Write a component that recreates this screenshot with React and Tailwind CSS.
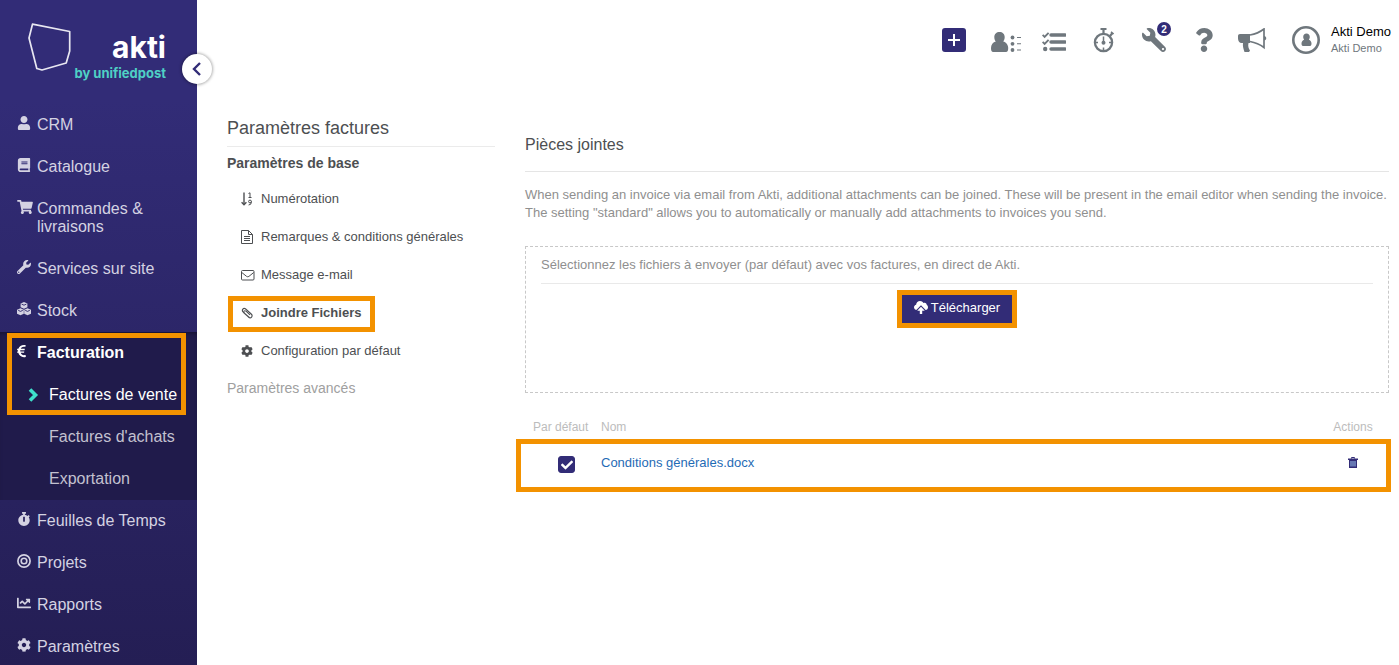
import React, { useState } from 'react';
import {
	FaUser,
	FaBook,
	FaShoppingCart,
	FaWrench,
	FaEuroSign,
	FaStopwatch,
	FaChartLine,
	FaCog,
	FaQuestion,
	FaCheck,
} from 'react-icons/fa';

const CubesIcon = () => (
	<svg viewBox="0 0 14 14" className="size-[14px]" fill="currentColor">
		<path d="M7 0 10.400 1.500V5.200L7 6.800 3.600 5.200V1.500zM3.500 6.200 6.800 7.700V11.700L3.500 13.300 0 11.700V7.700zM10.500 6.200 14 7.700V11.700L10.500 13.300 7.200 11.700V7.700z" />
		<path d="M4.600 2.100 7 3.200 9.400 2.100M1.200 8.300 3.500 9.400 5.800 8.300M8.200 8.300 10.500 9.400 12.800 8.300" fill="none" stroke="#2d2769" strokeWidth=".9" />
	</svg>
);

const TargetIcon = () => (
	<svg viewBox="0 0 14 14" className="size-[14px]" fill="none" stroke="currentColor">
		<circle cx="7" cy="7" r="6.100" strokeWidth="1.700" />
		<circle cx="7" cy="7" r="2.800" strokeWidth="1.600" />
	</svg>
);

const MENU_TOP = [
	{ label: 'CRM', icon: FaUser },
	{ label: 'Catalogue', icon: FaBook },
	{ label: 'Commandes & livraisons', icon: FaShoppingCart, iconClass: 'h-[14px] w-4' },
	{ label: 'Services sur site', icon: FaWrench },
	{ label: 'Stock', icon: CubesIcon },
];

const MENU_BOTTOM = [
	{ label: 'Feuilles de Temps', icon: FaStopwatch },
	{ label: 'Projets', icon: TargetIcon },
	{ label: 'Rapports', icon: FaChartLine },
	{ label: 'Paramètres', icon: FaCog },
];

const SortIcon = () => (
	<svg viewBox="0 0 12 14" className="h-[14px] w-3" fill="none" stroke="currentColor">
		<path d="M3 .5v12" strokeWidth="1.400" />
		<path d="M.6 10.200 3 12.800l2.400-2.600" strokeWidth="1.300" />
		<path d="M7.500 1.500 9 .8v4.700M7.500 5.500h3" />
		<circle cx="9" cy="9.500" r="1.400" />
		<path d="M10.400 9.500q.2 3.500-2.800 3.500" />
	</svg>
);

const FileTextIcon = () => (
	<svg viewBox="0 0 12 14" className="h-[14px] w-3" fill="none" stroke="currentColor">
		<path d="M.5.5h7l4 4v9H.5z" />
		<path d="M7.500.5v4h4M3 6.500h6M3 8.500h6M3 10.500h6" />
	</svg>
);

const EnvelopeIcon = () => (
	<svg viewBox="0 0 14 12" className="h-3 w-[14px]" fill="none" stroke="currentColor">
		<rect x=".5" y="1.500" width="12.500" height="9.500" rx="1" />
		<path d="M.8 3.500 5.600 7.400Q6.700 8.200 7.900 7.400L12.700 3.500" />
	</svg>
);

const ClipIcon = () => (
	<svg viewBox="0 0 12 12" className="size-3" fill="none" stroke="currentColor" strokeWidth="1.100">
		<path d="M8.600 10.600 2 4.800C.4 3.200 2.400.4 4.400 1.800L10.200 7c2.200 2.200-.3 5-2.600 3.200L3.400 6.400" />
		<path d="M3.400 6.400C1.600 4.600 3.400 2.800 5 4.200L9 7.900" />
	</svg>
);

const GearIcon = () => <FaCog className="size-3" />;

const SETTINGS = [
	{ label: 'Numérotation', icon: SortIcon },
	{ label: 'Remarques & conditions générales', icon: FileTextIcon },
	{ label: 'Message e-mail', icon: EnvelopeIcon },
	{ label: 'Joindre Fichiers', icon: ClipIcon, active: true },
	{ label: 'Configuration par défaut', icon: GearIcon },
];

const ContactsIcon = () => (
	<svg viewBox="0 0 30 20" className="h-5 w-[30px]" fill="currentColor">
		<path d="M8.500 0c3 0 5.200 2 5.200 5 0 2-.8 3.600-1.500 4.600 2.800.7 5 3.400 5 6.400 0 2.400-.6 4-2.200 4H2.200C.6 20 0 18.400 0 16c0-3 2-5.700 4.800-6.400C4 8.600 3.300 7 3.300 5c0-3 2.200-5 5.200-5Z" />
		<circle cx="21.500" cy="5.500" r="1.900" />
		<circle cx="21.500" cy="11.800" r="1.900" />
		<circle cx="21.500" cy="18" r="1.900" />
		<path d="M26 5h4v1h-4zM26 11.300h4v1h-4zM26 17.500h4v1h-4z" />
	</svg>
);

const TasksIcon = () => (
	<svg viewBox="0 0 24 20" className="h-5 w-6" fill="none" stroke="currentColor">
		<path d="M9 3h14M9 10h14M9 17h14" strokeWidth="3.400" strokeLinecap="round" />
		<path d="M.6 2.800 2.600 4.800 6.600.8M.6 9.800 2.600 11.800 6.600 7.800" strokeWidth="1.900" />
		<circle cx="3.200" cy="17" r="2.200" fill="currentColor" stroke="none" />
	</svg>
);

const TimerIcon = () => (
	<svg viewBox="0 0 22 25" className="h-[25px] w-[22px]" fill="none" stroke="currentColor">
		<circle cx="10.500" cy="14.500" r="8.600" strokeWidth="2.300" />
		<path d="M10.500 1v5M17 8l2.500-3" strokeWidth="2.200" />
		<path d="M18 3.800l2.600 2.200" strokeWidth="1.600" />
		<path d="M7.500 1h6" strokeWidth="2" />
		<path d="M10.500 8.500v6M10.500 19.500v3M3 14.500h2M16 14.500h2" strokeWidth="1.500" />
		<circle cx="10.500" cy="14.800" r="2" fill="currentColor" stroke="none" />
	</svg>
);

const MegaphoneIcon = () => (
	<svg viewBox="0 0 29 24" className="h-6 w-[29px]" fill="currentColor">
		<path d="M2 6h10v9h-1.500c-.8 3 .2 5.500 1.500 7.500l-1 1.500H6.500C5.500 21 4.500 18 5 15H3.500C1.500 15 0 13 0 10.500V8c0-1.200.8-2 2-2Z" />
		<path d="M12 7c5.500-1 10-3 14-6v18.500c-4-3-8.500-5-14-6" fill="none" stroke="currentColor" strokeWidth="1.700" />
		<path d="M26 8c3 .5 3 4 0 4.500z" />
	</svg>
);

const AvatarIcon = () => (
	<svg viewBox="0 0 28 28" className="size-7" fill="none">
		<circle cx="14" cy="14" r="12.700" stroke="currentColor" strokeWidth="2.600" />
		<path
			d="M14.500 7.500c2 0 3.300 1.400 3.300 3.400 0 1.200-.5 2.200-1 2.800 1.700.5 2.700 2 2.700 3.800 0 1.600-.4 2.500-1.500 2.500h-7c-1.100 0-1.500-.9-1.500-2.500 0-1.800 1-3.300 2.700-3.800-.5-.6-1-1.600-1-2.800 0-2 1.300-3.400 3.300-3.400Z"
			fill="currentColor"
		/>
	</svg>
);

const CloudUploadIcon = () => (
	<svg viewBox="0 0 14 13" className="h-[13px] w-[14px]">
		<path
			d="M2.800 9C1.200 9 0 7.800 0 6.300 0 5 .9 3.900 2.100 3.700 2.300 1.500 4 0 6 0c1.500 0 2.800.8 3.500 2 .4-.2.800-.2 1.100-.2 1.300 0 2.200 1 2.200 2.300.7.400 1.200 1.200 1.200 2.200C14 7.800 13 9 11.600 9z"
			fill="currentColor"
		/>
		<path d="M7 4.200 12.400 9.800H1.600z" fill="#322c77" />
		<path d="M7 5.800 10.800 9.700H8.200V13H5.800V9.700H3.200z" fill="currentColor" />
	</svg>
);

const TrashIcon = () => (
	<svg viewBox="0 0 10 11" className="h-[11px] w-[10px]" fill="none">
		<path d="M3.500 1.500v-1h3v1" stroke="#322c77" />
		<path d="M0 1.500h10V3H0zM1 3h8v8H1z" fill="#322c77" />
		<path d="M3 4v5.500M5 4v5.500M7 4v5.500" stroke="#9cc4f0" />
	</svg>
);

const Highlight = ({ className }) => (
	<span className={`pointer-events-none absolute border-[5px] border-[#f39200] ${className}`} />
);

const MenuItem = ({ label, icon: Icon, iconClass = 'size-[14px]', active }) => (
	<a
		href="#"
		className={`flex py-3 pl-[17px] pr-6 text-base leading-[18px] ${active ? 'font-bold text-white' : 'text-[#d4d2e2]'}`}
	>
		<span className="w-5 shrink-0">
			<Icon className={iconClass} />
		</span>
		<span>{label}</span>
	</a>
);

const Sidebar = () => (
	<aside className="relative w-[197px] shrink-0 bg-linear-to-b from-[#322c77] from-15% to-[#241e54]">
		<div className="flex h-[104px] pl-7 pt-[23px]">
			<svg viewBox="0 0 44 48" className="h-12 w-11 shrink-0" fill="none" stroke="#e8e7f1" strokeWidth="1.700">
				<path d="M4.500 1.200 41.700 8.500V28L38.200 40 14 47 8.800 45.500 1 15Z" strokeLinejoin="round" />
			</svg>
			<div className="-ml-8 w-[126px] pt-1 text-right font-[Inter,sans-serif] font-bold">
				<div className="text-[30px] leading-10 text-white">akti</div>
				<div className="text-[13px] leading-3 text-[#4fd1c5]">by unifiedpost</div>
			</div>
		</div>
		<button
			type="button"
			aria-label="Réduire le menu"
			className="absolute -right-[15px] top-[54px] z-10 flex size-[30px] items-center justify-center rounded-full bg-white shadow-[0_0_3px_1px_rgba(0,0,0,0.3)]"
		>
			<svg viewBox="0 0 10 14" className="h-[14px] w-[10px]" fill="none" stroke="#322c77" strokeWidth="2.400">
				<path d="M8 1 2 7l6 6" />
			</svg>
		</button>
		<nav>
			{MENU_TOP.map((item) => (
				<MenuItem key={item.label} {...item} />
			))}
			<div className="relative bg-[#201b4b] shadow-[inset_0_4px_5px_-3px_rgba(0,0,0,0.4)]">
				<MenuItem label="Facturation" icon={FaEuroSign} iconClass="h-[14px] w-[9px]" active />
				<a href="#" className="flex items-center py-3 pl-7 text-base leading-[18px] whitespace-nowrap text-white">
					<span className="w-[21px]">
						<svg viewBox="0 0 12 14" className="h-[14px] w-3" fill="none" stroke="#3fe0cb" strokeWidth="3.600">
							<path d="M2 1.500 7.500 7 2 12.500" />
						</svg>
					</span>
					Factures de vente
				</a>
				<a href="#" className="block py-3 pl-[49px] text-base leading-[18px] text-[#c3c1d0]">
					Factures d'achats
				</a>
				<a href="#" className="block py-3 pl-[49px] text-base leading-[18px] text-[#c3c1d0]">
					Exportation
				</a>
				<Highlight className="left-[7px] right-[11px] top-px h-[82px]" />
			</div>
			{MENU_BOTTOM.map((item) => (
				<MenuItem key={item.label} {...item} />
			))}
		</nav>
	</aside>
);

const HeaderButton = ({ label, children }) => (
	<button type="button" aria-label={label} className="flex h-7 w-[50px] items-center justify-center">
		{children}
	</button>
);

const Header = () => (
	<header className="flex h-20 items-center justify-end pr-2 text-[#6f777d]">
		<HeaderButton label="Ajouter">
			<span className="flex size-6 items-center justify-center rounded-[3px] bg-[#322c77]">
				<svg viewBox="0 0 12 12" className="size-3" stroke="#fff" strokeWidth="2">
					<path d="M6 0v12M0 6h12" />
				</svg>
			</span>
		</HeaderButton>
		<HeaderButton label="Contacts">
			<span className="pl-1 pt-1">
				<ContactsIcon />
			</span>
		</HeaderButton>
		<HeaderButton label="Tâches">
			<span className="pt-1">
				<TasksIcon />
			</span>
		</HeaderButton>
		<HeaderButton label="Chronomètre">
			<TimerIcon />
		</HeaderButton>
		<HeaderButton label="Outils">
			<span className="relative">
				<FaWrench className="size-6 -scale-x-100" />
				<span className="absolute -right-[5px] -top-[6px] flex size-[14px] items-center justify-center rounded-full bg-[#322c77] text-[10px] font-bold text-white">
					2
				</span>
			</span>
		</HeaderButton>
		<HeaderButton label="Aide">
			<FaQuestion className="size-6" />
		</HeaderButton>
		<HeaderButton label="Annonces">
			<span className="pr-1">
				<MegaphoneIcon />
			</span>
		</HeaderButton>
		<button type="button" className="ml-[13px] flex items-center gap-[11px] text-left">
			<AvatarIcon />
			<span>
				<span className="block text-[13px] leading-4 text-black">Akti Demo</span>
				<span className="block text-[11px] leading-4">Akti Demo</span>
			</span>
		</button>
	</header>
);

const SettingsNav = () => (
	<div className="w-[268px] shrink-0">
		<h1 className="border-b border-[#ebebeb] text-lg leading-9 text-[#4d4f52]">Paramètres factures</h1>
		<h2 className="text-sm leading-[33px] font-bold text-[#4d4f52]">Paramètres de base</h2>
		<ul>
			{SETTINGS.map(({ label, icon: Icon, active }) => (
				<li key={label} className="flex">
					<a
						href="#"
						className={`relative flex h-[38px] items-center px-[14px] text-[13px] text-[#4d4f52] ${active ? 'font-bold' : ''}`}
					>
						<span className="w-5">
							<Icon />
						</span>
						{label}
						{active && <Highlight className="left-px right-0 top-0.5 h-9" />}
					</a>
				</li>
			))}
		</ul>
		<a href="#" className="block text-sm leading-9 text-[#a0a0a0]">
			Paramètres avancés
		</a>
	</div>
);

const Attachments = () => {
	const [isDefault, setIsDefault] = useState(true);

	return (
		<section className="min-w-0 flex-1 pt-[9px]">
			<h2 className="border-b border-[#e5e5e5] text-base leading-[52px] text-[#4d4f52]">Pièces jointes</h2>
			<p className="mt-[14px] text-[13px] leading-[18px] text-[#8f8f8f]">
				When sending an invoice via email from Akti, additional attachments can be joined. These will be present in
				the email editor when sending the invoice. The setting "standard" allows you to automatically or manually
				add attachments to invoices you send.
			</p>

			<div className="mt-6 min-h-[147px] border border-dashed border-[#c8c8c8] px-[15px]">
				<p className="border-b border-[#e9e9e9] text-[13px] leading-9 text-[#8f8f8f]">
					Sélectionnez les fichiers à envoyer (par défaut) avec vos factures, en direct de Akti.
				</p>
				<div className="mt-[11px] flex justify-center">
					<button
						type="button"
						className="relative flex h-7 items-center gap-[3px] bg-[#322c77] px-3 pb-[3px] text-[13px] text-white"
					>
						<CloudUploadIcon />
						Télécharger
						<Highlight className="-inset-[5px]" />
					</button>
				</div>
			</div>

			<table className="mt-[21px] w-full text-left">
				<thead>
					<tr className="h-[25px] text-xs text-[#bcbcbc]">
						<th className="w-[68px] pl-2 font-normal whitespace-nowrap">Par défaut</th>
						<th className="pl-2 font-normal">Nom</th>
						<th className="w-[72px] text-center font-normal">Actions</th>
					</tr>
				</thead>
				<tbody>
					<tr className="relative h-[53px] text-[13px]">
						<td className="pb-0.5 pl-[33px]">
							<span className="relative block size-[17px]">
								<input
									type="checkbox"
									aria-label="Par défaut"
									checked={isDefault}
									onChange={(event) => setIsDefault(event.target.checked)}
									className="block size-[17px] appearance-none rounded-[3px] border border-[#322c77] checked:bg-[#322c77]"
								/>
								{isDefault && (
									<FaCheck className="pointer-events-none absolute inset-0 m-auto size-3 text-white" />
								)}
							</span>
						</td>
						<td className="pb-1.5 pl-2">
							<a href="#" className="text-[#1f6bb5]">
								Conditions générales.docx
							</a>
						</td>
						<td className="pb-1.5">
							<button type="button" aria-label="Supprimer" className="mx-auto block">
								<TrashIcon />
							</button>
							<Highlight className="-left-[9px] -right-0.5 inset-y-0" />
						</td>
					</tr>
				</tbody>
			</table>
		</section>
	);
};

const App = () => (
	<div className="flex h-screen overflow-hidden bg-white font-['Liberation_Sans',Arial,sans-serif]">
		<Sidebar />
		<div className="min-w-0 flex-1">
			<Header />
			<main className="flex gap-[30px] pl-[30px] pr-2.5 pt-[30px]">
				<SettingsNav />
				<Attachments />
			</main>
		</div>
	</div>
);

export default App;
